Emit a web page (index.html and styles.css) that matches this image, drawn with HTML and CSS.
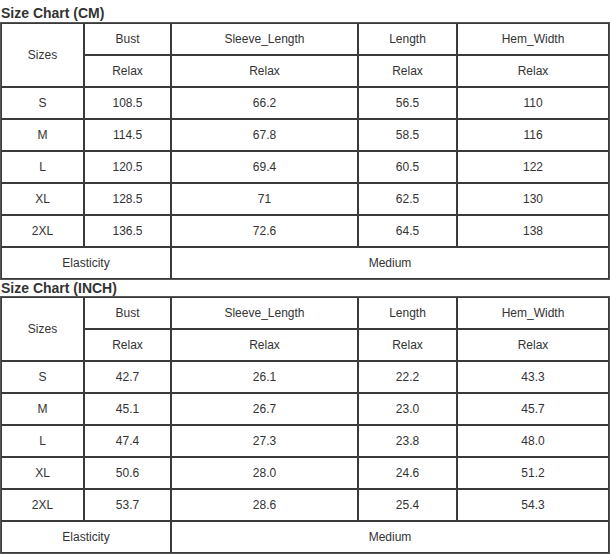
FILE: index.html
```html
<!DOCTYPE html>
<html>
<head>
<meta charset="utf-8">
<link rel="stylesheet" href="styles.css">
</head>
<body>
<div class="page">
  <h3 class="title">Size Chart (CM)</h3>
  <table class="chart">
    <colgroup><col class="c1"><col class="c2"><col class="c3"><col class="c4"><col class="c5"></colgroup>
    <tr><td rowspan="2">Sizes</td><td>Bust</td><td>Sleeve_Length</td><td>Length</td><td>Hem_Width</td></tr>
    <tr><td>Relax</td><td>Relax</td><td>Relax</td><td>Relax</td></tr>
    <tr><td>S</td><td>108.5</td><td>66.2</td><td>56.5</td><td>110</td></tr>
    <tr><td>M</td><td>114.5</td><td>67.8</td><td>58.5</td><td>116</td></tr>
    <tr><td>L</td><td>120.5</td><td>69.4</td><td>60.5</td><td>122</td></tr>
    <tr><td>XL</td><td>128.5</td><td>71</td><td>62.5</td><td>130</td></tr>
    <tr><td>2XL</td><td>136.5</td><td>72.6</td><td>64.5</td><td>138</td></tr>
    <tr><td colspan="2">Elasticity</td><td colspan="3">Medium</td></tr>
  </table>
  <h3 class="title title-next">Size Chart (INCH)</h3>
  <table class="chart">
    <colgroup><col class="c1"><col class="c2"><col class="c3"><col class="c4"><col class="c5"></colgroup>
    <tr><td rowspan="2">Sizes</td><td>Bust</td><td>Sleeve_Length</td><td>Length</td><td>Hem_Width</td></tr>
    <tr><td>Relax</td><td>Relax</td><td>Relax</td><td>Relax</td></tr>
    <tr><td>S</td><td>42.7</td><td>26.1</td><td>22.2</td><td>43.3</td></tr>
    <tr><td>M</td><td>45.1</td><td>26.7</td><td>23.0</td><td>45.7</td></tr>
    <tr><td>L</td><td>47.4</td><td>27.3</td><td>23.8</td><td>48.0</td></tr>
    <tr><td>XL</td><td>50.6</td><td>28.0</td><td>24.6</td><td>51.2</td></tr>
    <tr><td>2XL</td><td>53.7</td><td>28.6</td><td>25.4</td><td>54.3</td></tr>
    <tr><td colspan="2">Elasticity</td><td colspan="3">Medium</td></tr>
  </table>
</div>
</body>
</html>
```

FILE: styles.css
```css
html, body {
  margin: 0;
  padding: 0;
  background: #fff;
}
.page {
  padding-top: 5px;
  font-family: "Liberation Sans", Arial, sans-serif;
  color: #333;
}
.title {
  margin: 0;
  padding-left: 1px;
  font-size: 14px;
  font-weight: bold;
  line-height: 17px;
  color: #333;
}
.title-next {
  line-height: 16px;
}
.chart {
  width: 610px;
  table-layout: fixed;
  border-collapse: separate;
  border-spacing: 0;
  border: 1px solid #555;
}
.c1 { width: 83px; }
.c2 { width: 87px; }
.c3 { width: 187px; }
.c4 { width: 99px; }
.c5 { width: 152px; }
.chart td {
  box-sizing: border-box;
  height: 32px;
  padding: 0;
  border: 1px solid #3a3a3a;
  text-align: center;
  vertical-align: middle;
  font-size: 12px;
  color: #333;
}
```
